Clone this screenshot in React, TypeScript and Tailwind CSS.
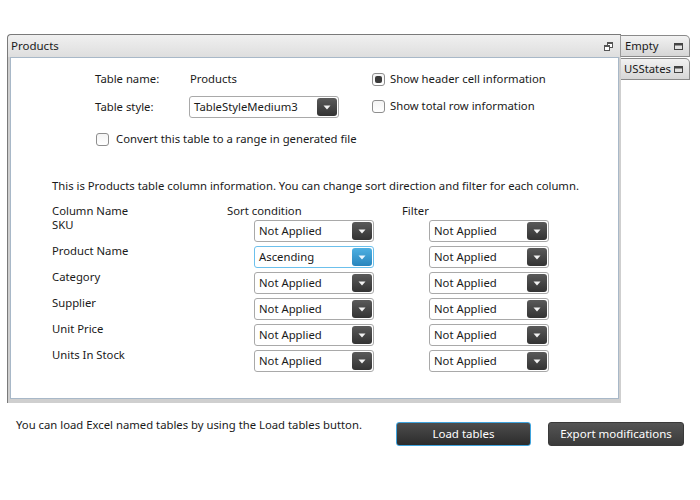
import React from "react";

const font = { fontFamily: '"Noto Sans", "Open Sans", sans-serif' };

function Arrow({ blue }: { blue?: boolean }) {
  return (
    <svg width="8" height="5" viewBox="0 0 8 5">
      <path d="M0.5 0.5 L7.5 0.5 L4 4.5 Z" fill={blue ? "#eaf6ff" : "#f2f2f2"} />
    </svg>
  );
}

function Dropdown({ value, width = "w-[120px]", focused }: { value: string; width?: string; focused?: boolean }) {
  return (
    <div
      className={`${width} h-[22px] flex items-center justify-between rounded-[3px] border bg-white pl-[4px] pr-[1px] ${
        focused ? "border-[#6cc0ec]" : "border-[#a9a9a9]"
      }`}
    >
      <span className="text-[11.3px] leading-none text-[#1a1a1a] whitespace-nowrap">{value}</span>
      <div
        className={`w-[20px] h-[18px] rounded-[3px] flex items-center justify-center ${
          focused
            ? "bg-gradient-to-b from-[#4eb0e2] to-[#2785bd]"
            : "bg-gradient-to-b from-[#5a5a5a] to-[#333333]"
        }`}
      >
        <Arrow blue={focused} />
      </div>
    </div>
  );
}

function Check({ checked }: { checked?: boolean }) {
  return (
    <div className="w-[13px] h-[13px] rounded-[3px] border border-[#8e8e8e] bg-gradient-to-b from-[#f4f4f4] to-white flex items-center justify-center shrink-0">
      {checked && <div className="w-[7px] h-[7px] rounded-[2px] bg-[#3a3a3a]" />}
    </div>
  );
}

function MaxIcon() {
  return (
    <svg width="9" height="7" viewBox="0 0 9 7">
      <rect x="0.5" y="0.5" width="8" height="6" fill="none" stroke="#444" />
      <rect x="0.5" y="0.5" width="8" height="2" fill="#444" />
    </svg>
  );
}

function RestoreIcon() {
  return (
    <svg width="9" height="9" viewBox="0 0 9 9">
      <rect x="3.5" y="0.5" width="5" height="5" fill="white" stroke="#555" />
      <rect x="3.5" y="0.5" width="5" height="1.5" fill="#555" />
      <rect x="0.5" y="3.5" width="5" height="5" fill="white" stroke="#555" />
      <rect x="0.5" y="3.5" width="5" height="1.5" fill="#555" />
    </svg>
  );
}

const rows = [
  { name: "SKU", sort: "Not Applied" },
  { name: "Product Name", sort: "Ascending", focused: true },
  { name: "Category", sort: "Not Applied" },
  { name: "Supplier", sort: "Not Applied" },
  { name: "Unit Price", sort: "Not Applied" },
  { name: "Units In Stock", sort: "Not Applied" },
];

export default function App() {
  return (
    <div className="w-[700px] h-[500px] bg-white text-[11.3px] text-[#1a1a1a] overflow-hidden" style={font}>
      <div className="flex pt-[34px] pl-[7px]">
        {/* main panel */}
        <div className="w-[614px] h-[369px] flex flex-col border-l border-t border-[#7a7a7a] rounded-tl-[4px] bg-[#cfcfcf]">
          <div className="h-[22px] flex items-center justify-between pl-[3px] pr-[7px] bg-gradient-to-b from-[#f0f0f0] to-[#dedede] border-r border-[#9a9a9a] rounded-tl-[4px]">
            <span className="text-[11.5px]">Products</span>
            <RestoreIcon />
          </div>
          <div className="flex-1 ml-[2px] mr-[2px] mb-[4px] bg-white border border-[#a8b8c8] flex flex-col">
            {/* top section */}
            <div className="flex pt-[10px]">
              <div className="ml-[84px] w-[277px] flex flex-col">
                <div className="h-[22px] flex items-center">
                  <span className="w-[95px]">Table name:</span>
                  <span>Products</span>
                </div>
                <div className="h-[22px] flex items-center mt-[6px]">
                  <span className="w-[94px]">Table style:</span>
                  <Dropdown value="TableStyleMedium3" width="w-[150px]" />
                </div>
                <div className="h-[22px] flex items-center mt-[10px] pl-[1px] gap-[7px]">
                  <Check />
                  <span className="whitespace-nowrap">Convert this table to a range in generated file</span>
                </div>
              </div>
              <div className="flex flex-col">
                <div className="h-[22px] flex items-center gap-[5px]">
                  <Check checked />
                  <span>Show header cell information</span>
                </div>
                <div className="h-[22px] flex items-center gap-[5px] mt-[5px]">
                  <Check />
                  <span>Show total row information</span>
                </div>
              </div>
            </div>
            {/* column info */}
            <div className="ml-[41px] mt-[28px] flex flex-col">
              <div className="h-[16px] leading-[16px] whitespace-nowrap">
                This is Products table column information. You can change sort direction and filter for each column.
              </div>
              <div className="grid grid-cols-[175px_175px_1fr] mt-[10px] h-[14px] leading-[14px]">
                <span>Column Name</span>
                <span>Sort condition</span>
                <span>Filter</span>
              </div>
              <div className="flex flex-col mt-[-2px]">
                {rows.map((r) => (
                  <div key={r.name} className="grid grid-cols-[175px_175px_1fr] h-[26px]">
                    <span className="leading-[16px] pt-[1px]">{r.name}</span>
                    <div className="pl-[27px] pt-[4px]">
                      <Dropdown value={r.sort} focused={r.focused} />
                    </div>
                    <div className="pl-[27px] pt-[4px]">
                      <Dropdown value="Not Applied" />
                    </div>
                  </div>
                ))}
              </div>
            </div>
          </div>
        </div>
        {/* side tabs */}
        <div className="flex flex-col pt-[1px] gap-[1px]">
          <div className="w-[69px] h-[22px] flex items-center justify-between pl-[4px] pr-[6px] border border-l-0 border-[#8a8a8a] rounded-tr-[5px] bg-gradient-to-b from-[#f2f2f2] to-[#d6d6d6]">
            <span>Empty</span>
            <MaxIcon />
          </div>
          <div className="w-[69px] h-[22px] flex items-center justify-between pl-[3px] pr-[6px] border border-l-0 border-[#8a8a8a] rounded-tr-[5px] bg-gradient-to-b from-[#f2f2f2] to-[#d6d6d6]">
            <span>USStates</span>
            <MaxIcon />
          </div>
        </div>
      </div>
      {/* bottom bar */}
      <div className="flex items-start pl-[16px] pt-[14px]">
        <span className="w-[380px] leading-[16px] whitespace-nowrap">
          You can load Excel named tables by using the Load tables button.
        </span>
        <button className="w-[135px] h-[24px] mt-[5px] rounded-[3px] border border-[#3ea3dd] bg-gradient-to-b from-[#4d4d4d] to-[#2c2c2c] text-white text-[11.5px]">
          Load tables
        </button>
        <button className="ml-[17px] w-[136px] h-[24px] mt-[5px] rounded-[3px] border border-[#3a3a3a] bg-gradient-to-b from-[#555555] to-[#3a3a3a] text-white text-[11.5px]">
          Export modifications
        </button>
      </div>
    </div>
  );
}
